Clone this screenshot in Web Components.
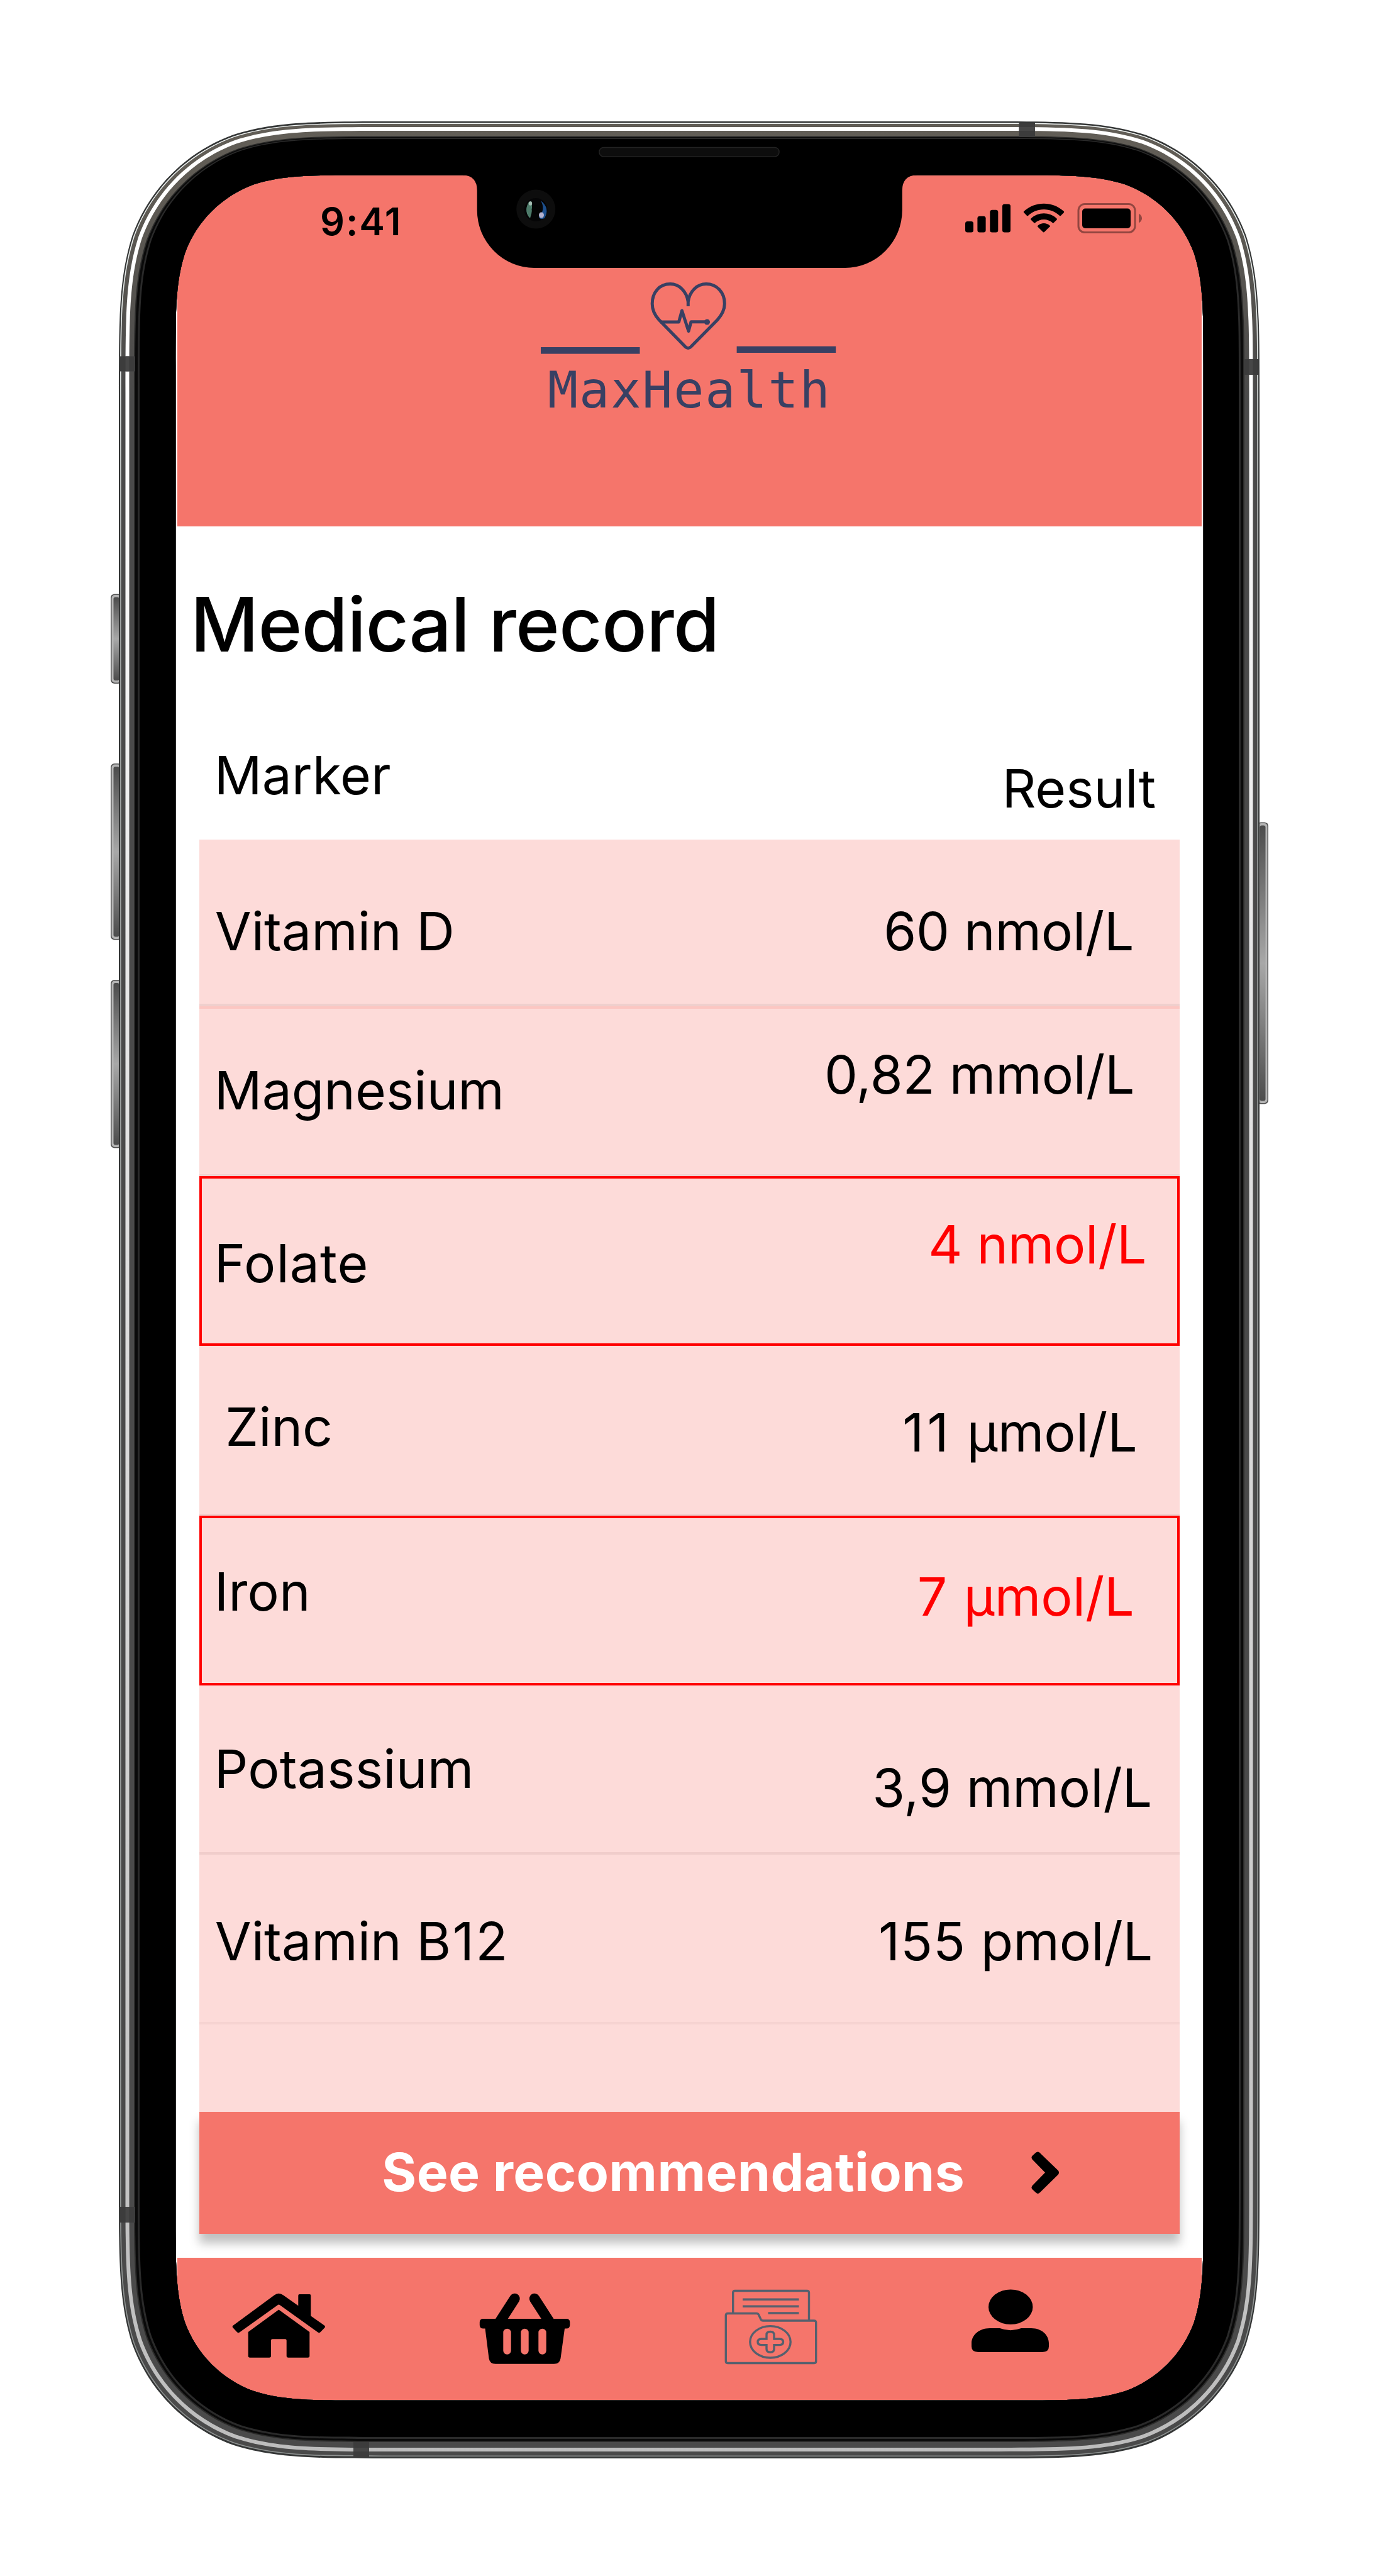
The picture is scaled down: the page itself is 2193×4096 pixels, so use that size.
<!DOCTYPE html>
<html lang="en">
<head>
<meta charset="utf-8">
<title>MaxHealth – Medical record</title>
<style>
  html, body { margin: 0; background: #fff; }
  body { width: 2193px; height: 4096px; overflow: hidden; font-family: Inter, "Liberation Sans", sans-serif; color: #000; }
</style>
</head>
<body>
<phone-frame>
  <app-header time="9:41" brand="MaxHealth"></app-header>
  <medical-record heading="Medical record">
    <marker-row slot="head" style="--h:282.3px;--ld:130px;--rd:151.3px;--lp:24px;--rp:38px"><span slot="name">Marker</span><span slot="value">Result</span></marker-row>
    <marker-row style="--h:265px;--ld:96px;--rd:96.5px;--lp:25px;--rp:73px;--line:#efcfcd;--lh:4px"><span slot="name">Vitamin D</span><span slot="value" style="letter-spacing:-.25px">60 nmol/L</span></marker-row>
    <marker-row style="--h:270px;--ld:84px;--rd:59.5px;--lp:24px;--rp:72px;--line:#f0d0ce;--lh:3px;--top:#fcc6c2"><span slot="name">Magnesium</span><span slot="value" style="letter-spacing:-.2px">0,82 mmol/L</span></marker-row>
    <marker-row alert style="--h:270px;--ld:88.8px;--rd:59.5px;--lp:24px;--rp:53px"><span slot="name" style="letter-spacing:1px">Folate</span><span slot="value" style="letter-spacing:-.3px">4 nmol/L</span></marker-row>
    <marker-row style="--h:270px;--ld:79.5px;--rd:88.5px;--lp:41.5px;--rp:67.5px;--line:#f0d0ce;--lh:3px"><span slot="name">Zinc</span><span slot="value"><span style="letter-spacing:5.2px">11</span> µmol/L</span></marker-row>
    <marker-row alert style="--h:270px;--ld:71.5px;--rd:79.5px;--lp:24px;--rp:72.5px"><span slot="name">Iron</span><span slot="value"><span style="letter-spacing:2.5px">7</span> µmol/L</span></marker-row>
    <marker-row style="--h:269px;--ld:83.5px;--rd:113.5px;--lp:24px;--rp:44px;--line:#f0cdcb;--lh:4px"><span slot="name" style="letter-spacing:.2px">Potassium</span><span slot="value">3,9 mmol/L</span></marker-row>
    <marker-row style="--h:270px;--ld:88.5px;--rd:88.5px;--lp:25px;--rp:43px;--line:#f6d3d1;--lh:4px"><span slot="name">Vitamin <span style="letter-spacing:2.4px">B12</span></span><span slot="value"><span style="letter-spacing:1px">155</span> pmol/L</span></marker-row>
    <recommend-button slot="action">See recommendations</recommend-button>
  </medical-record>
  <tab-bar></tab-bar>
</phone-frame>

<script>
const define = (name, render) => customElements.define(name, class extends HTMLElement {
  constructor() { super(); this.attachShadow({ mode: 'open' }); }
  connectedCallback() { this.shadowRoot.innerHTML = render(this); }
});

/* Rounded body outline with continuous-curvature corners, inset by (dx, dt, db). */
function outline(l, t, r, b, rx, ry) {
  const k = [[1.52866, 0], [1.08849, 0], [.86841, 0], [.63149, .07491], [.37282, .16906], [.16906, .37282], [.07491, .63149], [0, .86841], [0, 1.08849], [0, 1.52866]];
  const corner = (cx, cy, sx, sy, rev) => {
    const p = (rev ? [...k].reverse() : k).map(([x, y]) => (cx + sx * x * rx).toFixed(2) + ' ' + (cy + sy * y * ry).toFixed(2));
    return `${p[0]}C${p[1]} ${p[2]} ${p[3]}C${p[4]} ${p[5]} ${p[6]}C${p[7]} ${p[8]} ${p[9]}`;
  };
  return 'M' + corner(l, t, 1, 1, true) + 'L' + corner(r, t, -1, 1, false) + 'L' + corner(r, b, -1, -1, true) + 'L' + corner(l, b, 1, -1, false) + 'Z';
}
const shell = (dx, dt = dx, db = dx) => outline(189 + dx, 193 + dt, 2003 - dx, 3909 - db, 287 - dx, 287 - dx);

define('phone-frame', () => {
  const hole = outline(279.3, 278.5, 1913.7, 3816.8, 197, 197);
  const sideKey = (x, y, h) => `<rect x="${x}" y="${y}" width="18" height="${h}" rx="6" fill="#505050"/><rect x="${x + 1.5}" y="${y + 1.5}" width="15" height="${h - 3}" rx="5" fill="#b4b4b4"/><rect x="${x + 4.5}" y="${y + 5}" width="9" height="${h - 10}" rx="3" fill="url(#key)"/>`;
  return `
<style>
  :host { display: grid; width: 2193px; height: 4096px; }
  svg, .screen { grid-area: 1 / 1; }
  svg { z-index: 1; display: block; }
  .screen { margin: 278px 279px 278px 279px; background: #fff; display: flex; flex-direction: column; height: 3540px; }
</style>
<div class="screen"><slot></slot></div>
<svg width="2193" height="4096" viewBox="0 0 2193 4096">
  <defs>
    <linearGradient id="body" x1="0" y1="193" x2="0" y2="3909" gradientUnits="userSpaceOnUse"><stop offset="0" stop-color="#625e57"/><stop offset=".03" stop-color="#5f5b54"/><stop offset=".12" stop-color="#4a4a4a"/><stop offset="1" stop-color="#4a4a4a"/></linearGradient>
    <linearGradient id="shine" x1="0" y1="193" x2="0" y2="3909" gradientUnits="userSpaceOnUse"><stop offset="0" stop-color="#fff"/><stop offset=".12" stop-color="#fff"/><stop offset=".35" stop-color="#e8e8e8"/><stop offset=".85" stop-color="#c6c6c6"/><stop offset="1" stop-color="#bdbdbd"/></linearGradient>
    <linearGradient id="key" x1="0" y1="0" x2="0" y2="1"><stop offset="0" stop-color="#4c4c4c"/><stop offset=".5" stop-color="#a8a8a8"/><stop offset="1" stop-color="#4c4c4c"/></linearGradient>
    <linearGradient id="edge" x1="0" y1="193" x2="0" y2="3909" gradientUnits="userSpaceOnUse"><stop offset="0" stop-color="#f4f8f7"/><stop offset=".1" stop-color="#e0e5e3"/><stop offset=".2" stop-color="#9fa3a2"/><stop offset="1" stop-color="#8f9392"/></linearGradient>
    <clipPath id="clip"><path d="${shell(1.5)}"/></clipPath>
  </defs>
  ${sideKey(176, 944.5, 142.5)}${sideKey(176, 1214, 280.5)}${sideKey(176, 1558, 267.5)}${sideKey(1999, 1307.5, 448)}
  <g fill-rule="evenodd">
    <path d="${shell(0)}${hole}" fill="#343636"/>
    <path d="${shell(2, 2.6, 3)}${hole}" fill="url(#edge)"/>
    <path d="${shell(3.7, 4, 4.5)}${hole}" fill="url(#body)"/>
    <path d="${shell(10.5, 9, 11)}${hole}" fill="url(#shine)"/>
    <path d="${shell(16.5, 15, 17)}${hole}" fill="url(#body)"/>
    <path d="${shell(24, 23.5, 26)}${hole}" fill="#2b2b2a"/>
    <path d="${shell(26, 25, 28)}${hole}" fill="#0a0a0a"/>
    <path d="${shell(30, 26.5, 31)}${hole}" fill="#2a2a2a"/>
    <path d="${shell(33, 28, 34)}${hole}" fill="#000"/>
  </g>
  <g clip-path="url(#clip)" fill="#3c3c3c">
    <rect x="1620.5" y="195" width="25.5" height="23"/><rect x="190" y="566.5" width="25" height="24"/>
    <rect x="1978" y="571" width="25" height="25"/><rect x="190" y="3509" width="25" height="25"/>
    <rect x="562" y="3883" width="25" height="25"/>
    <g fill="#474747"><rect x="1620.5" y="202" width="25.5" height="6"/><rect x="199.5" y="566.5" width="6" height="24"/><rect x="1986.5" y="571" width="6" height="25"/><rect x="199.5" y="3509" width="6" height="25"/><rect x="562" y="3892" width="25" height="6"/></g>
  </g>
  <path d="M736 277V278.6Q758.7 279.5 758.7 303V334A91.5 92 0 0 0 850 426H1343.5A91.5 92 0 0 0 1434.8 334V303Q1434.8 279.5 1457.5 278.6V277Z" fill="#000"/>
  <rect x="953" y="234.5" width="286" height="14.5" rx="7" fill="#0d0d0d" stroke="#222" stroke-width="1.5"/>
  <circle cx="852.2" cy="332.6" r="31" fill="#0d0d0d"/>
  <circle cx="852.2" cy="333.5" r="18.5" fill="#050506"/>
  <path d="M845 319A18 18 0 0 0 843 347Q838 333 845 319Z" fill="#5f9480"/>
  <path d="M841 321Q833 334 843 347Q848 334 845 320Z" fill="#4d7a69"/>
  <path d="M860 319Q875 331 866 347Q859 350 857 345Q868 333 860 319Z" fill="#1d4f8c"/>
  <circle cx="852.5" cy="333" r="7" fill="#040404"/>
  <ellipse cx="843.5" cy="323.5" rx="2.6" ry="3.2" fill="#a5bdb3"/><ellipse cx="861" cy="342" rx="4" ry="4.5" fill="#b5b3d0"/>
</svg>`;
});

define('app-header', el => `
<style>
  :host { display: flex; flex-direction: column; flex: none; height: 559.4px; margin: 0 3px; background: #f5756b; }
  .status { display: flex; justify-content: space-between; align-items: flex-start; box-sizing: border-box; height: 171px; padding: 43.5px 94px 0 227px; }
  .time { font-weight: 600; font-size: 61px; line-height: 61px; letter-spacing: 1.9px; }
  .icons { margin-top: 1.5px; display: block; }
  .logo { display: flex; flex-direction: column; align-items: flex-start; margin-left: 578px; color: #384063; }
  .logo svg { display: block; }
  .brand { font: 400 80px/80px "DejaVu Sans Mono", monospace; letter-spacing: 1.9px; margin: 17.6px 0 0 11px; white-space: nowrap; }
</style>
<div class="status">
  <span class="time">${el.getAttribute('time')}</span>
  <svg class="icons" width="282" height="48" viewBox="1535 323 282 48">
    <rect x="1535" y="352" width="13" height="17.6" rx="3.5"/><rect x="1554.4" y="343.7" width="13.2" height="25.9" rx="3.5"/><rect x="1574.3" y="333.8" width="13" height="35.8" rx="3.5"/><rect x="1594" y="324.5" width="13" height="45.1" rx="3.5"/>
    <g transform="translate(1626.5 323.2) scale(3.91 3.97)"><path d="M8.57 2.47c2.4 0 4.7.9 6.42 2.5.13.13.34.13.47 0l1.24-1.22c.07-.07.1-.15.1-.25s-.04-.18-.1-.25C12.15-.93 4.98-.93.44 3.25c-.07.07-.1.15-.1.25s.03.18.1.25l1.24 1.22c.13.13.34.13.47 0C3.87 3.37 6.17 2.47 8.57 2.47ZM8.57 6.5c1.3 0 2.57.48 3.54 1.34.13.13.34.13.47 0l1.24-1.22c.07-.07.1-.16.1-.26 0-.1-.04-.19-.11-.26-2.95-2.75-7.53-2.75-10.48 0-.07.07-.11.16-.11.26s.03.19.1.26l1.24 1.22c.13.13.34.13.47 0C6 6.98 7.26 6.5 8.57 6.5ZM11.02 9.44c.07-.07.1-.16.1-.26s-.04-.19-.12-.25c-1.4-1.19-3.47-1.19-4.87 0-.08.06-.12.15-.12.25s.03.19.1.26l2.15 2.12c.06.06.15.1.24.1s.18-.04.24-.1l2.15-2.12Z"/></g>
    <rect x="1715" y="324.6" width="90" height="45" rx="10" fill="none" stroke="#000" stroke-opacity=".4" stroke-width="3"/>
    <rect x="1721" y="331.6" width="77" height="31.4" rx="5"/>
    <path d="M1811 339.8Q1816 342.5 1816 347.2Q1816 351.8 1811 354.5Z" fill-opacity=".4"/>
  </svg>
</div>
<div class="logo">
  <svg width="470" height="114" viewBox="860 449 470 114">
    <rect x="860" y="552" width="157.5" height="10.6" fill="currentColor"/><rect x="1171.6" y="550.6" width="157.6" height="10.4" fill="currentColor"/>
    <g fill="none" stroke="currentColor" stroke-width="5" stroke-linejoin="round">
      <path d="M1094.3 487V480C1092 463 1080 451.6 1066 451.6C1048.5 451.6 1037.2 465 1037.2 483C1037.2 493 1041 501 1048 508.5L1090 551.5Q1094.3 555.5 1098.6 551.5L1141 508.5C1148.5 500 1152.3 493 1152.3 483C1152.3 465 1140 451.6 1123 451.6C1108.5 451.6 1096.5 463 1094.3 480"/>
      <path d="M1050 512H1079.5L1084.5 494L1095 526.5L1099 511.7H1124.6"/>
    </g>
    <circle cx="1124.5" cy="512" r="4.6" fill="currentColor"/>
  </svg>
  <span class="brand">${el.getAttribute('brand')}</span>
</div>`);

define('medical-record', el => `
<style>
  :host { display: flex; flex-direction: column; flex: none; height: 2753.1px; box-sizing: border-box; padding: 0 37.7px 0 37.8px; }
  h1 { margin: 95.3px 0 0 -14px; font-weight: 500; font-size: 119px; line-height: 120px; letter-spacing: -.85px; white-space: nowrap; }
  .rows { display: flex; flex-direction: column; height: 2023px; background: #fddbd9; }
</style>
<h1>${el.getAttribute('heading')}</h1>
<slot name="head"></slot>
<div class="rows"><slot></slot></div>
<slot name="action"></slot>`);

define('marker-row', () => `
<style>
  :host { display: flex; justify-content: space-between; align-items: flex-start; flex: none; box-sizing: border-box; height: var(--h);
    font-size: 84px; line-height: 100px; white-space: nowrap;
    background: linear-gradient(var(--top, transparent), var(--top, transparent)) top / 100% 4px no-repeat,
                linear-gradient(var(--line, transparent), var(--line, transparent)) bottom / 100% var(--lh, 4px) no-repeat; }
  :host([alert]) { outline: 4px solid #f00; outline-offset: -4px; }
  .name { padding: var(--ld) 0 0 var(--lp); }
  .value { padding: var(--rd) var(--rp) 0 0; }
  :host([alert]) .value { color: #f00; }
</style>
<div class="name"><slot name="name"></slot></div>
<div class="value"><slot name="value"></slot></div>`);

define('recommend-button', () => `
<style>
  :host { display: flex; align-items: flex-start; flex: none; height: 193.8px; background: #f5756b; color: #fff; box-shadow: 0 15px 15px rgba(0,0,0,.25); position: relative; }
  .label { font-weight: 700; font-size: 84px; line-height: 100px; letter-spacing: .37px; padding: 46.5px 0 0 290.5px; white-space: nowrap; }
  svg { display: block; margin: 62px 0 0 104.5px; }
</style>
<span class="label"><slot></slot></span>
<svg width="46" height="70" viewBox="1638.5 3420 46 70"><path d="M1650 3421.5Q1652 3421.5 1653.5 3423.5L1682.5 3451.5Q1684.5 3454.5 1682.5 3457.5L1653.5 3486Q1650 3489.5 1647 3486.5L1640.5 3480.5Q1639 3478 1641 3475.5L1661.5 3454.5L1641 3433.5Q1639 3431 1640.5 3428.5L1646.5 3423Q1648 3421.5 1650 3421.5Z" fill="#000"/></svg>`);

define('tab-bar', () => `
<style>
  :host { display: flex; align-items: flex-start; flex: none; height: 228px; margin: 0 3px; background: #f5756b; }
  svg { display: block; margin-top: 47.5px; flex: none; }
</style>
<svg width="152" height="122" viewBox="367 3638 152 122" style="margin-left:85px">
  <path d="M436.5 3649.3Q443.3 3644 450.2 3649.3L474.3 3666.3V3650Q474.3 3648 476.3 3648H492.3Q494.3 3648 494.3 3650V3682.4L516 3697.8Q517.6 3699.2 516.5 3701L509.5 3708.3Q507.5 3710 505.5 3708.5L445.5 3665.5Q443.3 3663.5 441.2 3665.5L381 3708.5Q379 3710 377 3708.3L370.2 3701Q369 3699.2 370.6 3697.8Z"/>
  <path d="M443.3 3672.5L492.3 3708V3746Q492.3 3748.8 489.5 3748.8H458.5Q455.7 3748.8 455.7 3746V3721.5Q455.7 3719.3 453.5 3719.3H433.2Q431 3719.3 431 3721.5V3746Q431 3748.8 428.2 3748.8H397.5Q394.7 3748.8 394.7 3746V3708Z"/>
</svg>
<svg width="148" height="124" viewBox="761 3638 148 124" style="margin-left:242px">
  <g stroke="#000" stroke-width="16.5" stroke-linecap="round"><path d="M818.5 3655L794 3693"/><path d="M850 3655L874.5 3693"/></g>
  <path fill-rule="evenodd" d="M768.5 3687H900.5Q906.3 3687 906.3 3692.5V3697Q906.3 3702.5 900.5 3702.5H898L891.5 3750Q890 3758.8 881 3758.8H788Q779 3758.8 777.5 3750L771.5 3702.5H768.5Q762.8 3702.5 762.8 3697V3692.5Q762.8 3687 768.5 3687ZM800.3 3709V3737.5A6.2 6.2 0 0 0 812.7 3737.5V3709A6.2 6.2 0 0 0 800.3 3709ZM828.3 3709V3737.5A6.2 6.2 0 0 0 840.7 3737.5V3709A6.2 6.2 0 0 0 828.3 3709ZM856.3 3709V3737.5A6.2 6.2 0 0 0 868.7 3737.5V3709A6.2 6.2 0 0 0 856.3 3709Z"/>
</svg>
<svg width="150" height="124" viewBox="1151 3638 150 124" style="margin-left:242px" fill="none" stroke="#55606e" stroke-width="3.4">
  <path d="M1165.7 3677.5V3645.5Q1165.7 3642.5 1168.7 3642.5H1283.5Q1286.5 3642.5 1286.5 3645.5V3689.5"/>
  <path d="M1181 3656.2H1270.5M1181 3667.3H1270.5M1221.5 3678H1270.5"/>
  <path d="M1157.5 3678.5H1203Q1205.5 3678.5 1206.5 3680.5L1210 3688Q1211 3690 1213.5 3690H1294.5Q1297.7 3690 1297.7 3693V3754.5Q1297.7 3757.5 1294.5 3757.5H1157.5Q1154.3 3757.5 1154.3 3754.5V3681.5Q1154.3 3678.5 1157.5 3678.5Z"/>
  <ellipse cx="1225" cy="3723.8" rx="32.2" ry="25.2"/>
  <path d="M1219 3719V3712.5Q1219 3707.5 1225 3707.5T1231 3712.5V3719H1239.5Q1245.5 3719 1245.5 3723.8T1239.5 3728.6H1231V3735Q1231 3740.2 1225 3740.2T1219 3735V3728.6H1211Q1205 3728.6 1205 3723.8T1211 3719Z"/>
</svg>
<svg width="126" height="104" viewBox="1543 3638 126 104" style="margin-left:242px">
  <ellipse cx="1607.2" cy="3668.2" rx="35.2" ry="27.8"/>
  <path d="M1574 3702H1590Q1607 3708.5 1624 3702H1640C1657 3702 1668 3713 1668 3726V3731Q1668 3739.9 1657.5 3739.9H1556Q1545 3739.9 1545 3731V3726C1545 3713 1557 3702 1574 3702Z"/>
</svg>`);
</script>
</body>
</html>
